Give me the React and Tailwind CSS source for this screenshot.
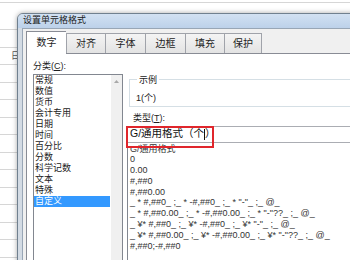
import React from "react";

const categories = ["常规", "数值", "货币", "会计专用", "日期", "时间", "百分比", "分数", "科学记数", "文本", "特殊", "自定义"];

const formats = [
  "G/通用格式",
  "0",
  "0.00",
  "#,##0",
  "#,##0.00",
  '_ * #,##0_ ;_ * -#,##0_ ;_ * "-"_ ;_ @_',
  '_ * #,##0.00_ ;_ * -#,##0.00_ ;_ * "-"??_ ;_ @_',
  '_ ¥* #,##0_ ;_ ¥* -#,##0_ ;_ ¥* "-"_ ;_ @_',
  '_ ¥* #,##0.00_ ;_ ¥* -#,##0.00_ ;_ ¥* "-"??_ ;_ @_',
  "#,##0;-#,##0",
];

const tabs = [
  { label: "数字", w: "w-[40px]" },
  { label: "对齐", w: "w-[39px]" },
  { label: "字体", w: "w-[40px]" },
  { label: "边框", w: "w-[40px]" },
  { label: "填充", w: "w-[39px]" },
  { label: "保护", w: "w-[38px]" },
];

export default function App() {
  return (
    <div className="relative w-[350px] h-[260px] overflow-hidden bg-white font-['Liberation_Sans','Noto_Sans_CJK_SC',sans-serif] text-[#1e1e1e]">
      {/* sheet behind the dialog */}
      <div className="flex flex-col">
        <div className="h-[3px] border-b border-[#d6d6d6]" />
        <div className="h-[27px] border-b border-[#d6d6d6]" />
        <div className="h-[17.5px] border-b border-[#d6d6d6]" />
        <div className="h-[17.5px] border-b border-[#d6d6d6] pl-[11px] text-[9px] leading-[17px] text-[#555]">日</div>
        {Array.from({ length: 12 }).map((_, i) => (
          <div key={i} className="h-[17.5px] border-b border-[#d6d6d6]" />
        ))}
      </div>

      {/* dialog window */}
      <div className="absolute left-[17px] top-[13px] w-[360px] h-[260px] flex flex-col rounded-tl-[6px] border border-[#70808f] bg-[#d3dbe4] shadow-[0_0_5px_rgba(0,0,0,0.35)]">
        {/* title bar */}
        <div className="h-[19px] flex items-center pl-[5px] rounded-tl-[5px] bg-gradient-to-b from-[#d2e1f2] to-[#bcd1ea] text-[9px] text-[#1a1a1a]">
          设置单元格格式
        </div>

        {/* client */}
        <div className="flex-1 ml-[4px] border-l border-t border-[#98a6b6] bg-[#f0f0f0] flex flex-col">
          {/* tabs */}
          <div className="relative z-10 h-[24px] pl-[3px] flex items-end text-[10px]">
            {tabs.map((t, i) =>
              i === 0 ? (
                <div
                  key={t.label}
                  className={`${t.w} h-[23px] -mb-px flex items-center justify-center border-l border-t border-[#898c95] bg-white`}
                >
                  {t.label}
                </div>
              ) : (
                <div
                  key={t.label}
                  className={`${t.w} h-[20px] flex items-center justify-center border-l border-t border-[#a0a3aa] bg-gradient-to-b from-[#f4f4f4] to-[#e3e3e3] ${i === tabs.length - 1 ? "border-r" : ""}`}
                >
                  {t.label}
                </div>
              )
            )}
          </div>

          {/* tab panel */}
          <div className="flex-1 ml-[3px] border border-[#898c95] bg-white flex pl-[6px] pt-[6px] text-[9px]">
            {/* category column */}
            <div className="w-[90px] flex flex-col">
              <div className="leading-[12px] mb-[2px]">
                分类(<span className="underline">C</span>):
              </div>
              <div className="h-[200px] border border-[#828790] flex">
                <div className="flex-1 flex flex-col pr-[1px]">
                  {categories.map((c) => (
                    <div
                      key={c}
                      className={`leading-[11px] pl-[1px] ${c === "自定义" ? "bg-[#3399ff] text-white" : "text-[#222]"}`}
                    >
                      {c}
                    </div>
                  ))}
                </div>
                <div className="w-[11px] bg-[#f0f0f0] flex justify-center pt-[5px]">
                  <svg width="5" height="3" viewBox="0 0 5 3">
                    <path d="M0 3 L2.5 0 L5 3 Z" fill="#a8a8a8" />
                  </svg>
                </div>
              </div>
            </div>

            {/* type column */}
            <div className="flex-1 ml-[4px] flex flex-col pt-[14px]">
              <fieldset className="ml-[2px] border border-[#d5dfe5] pl-[6px] pb-[2px]">
                <legend className="ml-[1px] px-[2px] leading-[12px] text-[#222]">示例</legend>
                <div className="leading-[12px] mt-[6px] text-[#222]">1(个)</div>
              </fieldset>
              <div className="mt-[5px] pl-[6px] leading-[12px]">
                类型(<span className="underline">T</span>):
              </div>
              <div className="mt-[2px] h-[17px] border border-[#abadb3] flex items-center pl-[2px] text-[10.5px] text-[#111]">
                G/通用格式（个
                <span className="inline-block w-px h-[11px] bg-[#111]" />
                ）
              </div>
              <div className="flex-1 border border-t-0 border-[#828790] pl-[2px] pt-px flex flex-col text-[9px] text-[#333]">
                {formats.map((f) => (
                  <div key={f} className="leading-[10.8px] whitespace-pre">
                    {f}
                  </div>
                ))}
              </div>
            </div>
          </div>
        </div>
      </div>

      {/* red annotation box */}
      <div className="absolute left-[126px] top-[126px] w-[88px] h-[22px] border-2 border-[#e0262c]" />
    </div>
  );
}
